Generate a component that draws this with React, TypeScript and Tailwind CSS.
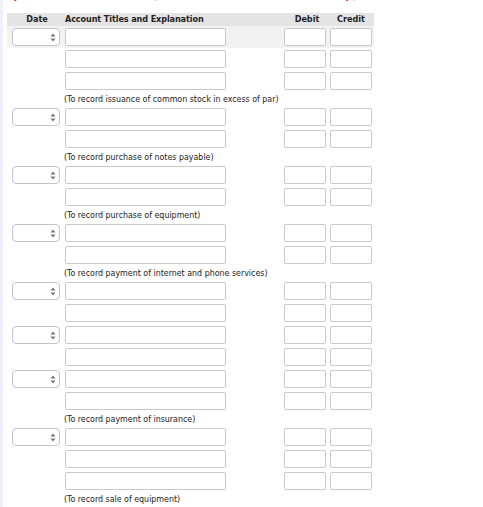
import React from 'react';

type Entry = { rows: number; note?: string };

const ENTRIES: Entry[] = [
  { rows: 3, note: '(To record issuance of common stock in excess of par)' },
  { rows: 2, note: '(To record purchase of notes payable)' },
  { rows: 2, note: '(To record purchase of equipment)' },
  { rows: 2, note: '(To record payment of internet and phone services)' },
  { rows: 2 },
  { rows: 2 },
  { rows: 2, note: '(To record payment of insurance)' },
  { rows: 3, note: '(To record sale of equipment)' },
];

const box = 'h-[18px] border border-[#c9c9c9] rounded-[2px] bg-white';

const DateSelect = () => (
  <div className="w-[48px] h-[18px] border border-[#c4c4c4] rounded-[4px] bg-white flex items-center justify-end pr-[3px]">
    <svg width="6" height="9" viewBox="0 0 6 9">
      <path d="M3 0.5 L5.5 3.5 H0.5 Z" fill="#777" />
      <path d="M3 8.5 L5.5 5.5 H0.5 Z" fill="#777" />
    </svg>
  </div>
);

const JournalRow = ({ dated, highlight }: { dated: boolean; highlight: boolean }) => (
  <div className={`flex items-center h-[22px] ${highlight ? 'bg-[#f2f2f2]' : ''}`}>
    <div className="w-[58px] pl-[5px]">{dated && <DateSelect />}</div>
    <div className={`w-[161px] ${box}`} />
    <div className="w-[58px]" />
    <div className={`w-[42px] ${box}`} />
    <div className="w-[4px]" />
    <div className={`w-[42px] ${box}`} />
  </div>
);

export default function App() {
  return (
    <div className="w-[483px] h-[507px] bg-white overflow-hidden border-l-[3px] border-[#eef2f8] font-['DejaVu_Sans_Condensed','DejaVu_Sans',sans-serif] text-[#222]">
      {/* instructions line, scrolled mostly out of view */}
      <div className="h-[13px] overflow-hidden relative">
        <p className="absolute left-[12px] top-[-11px] text-[11px] leading-[13px] text-[#e00] whitespace-nowrap">
          Journalize the transactions. (Credit titles are indented automatically.)
        </p>
      </div>

      <div className="ml-[4px] w-[367px]">
        <div className="flex items-center h-[13px] bg-[#e4e4e4] text-[9px] font-bold leading-[13px]">
          <div className="w-[58px] text-center pl-[2px]">Date</div>
          <div className="w-[219px] tracking-[-0.1px]">Account Titles and Explanation</div>
          <div className="w-[46px] text-center">Debit</div>
          <div className="w-[42px] text-center">Credit</div>
        </div>

        {ENTRIES.map((entry, i) => (
          <div key={i}>
            {Array.from({ length: entry.rows }).map((_, r) => (
              <JournalRow key={r} dated={r === 0} highlight={i === 0 && r === 0} />
            ))}
            {entry.note && (
              <div className="h-[14px] pl-[57px] text-[8.8px] leading-[14px] whitespace-nowrap">
                {entry.note}
              </div>
            )}
          </div>
        ))}
      </div>
    </div>
  );
}
